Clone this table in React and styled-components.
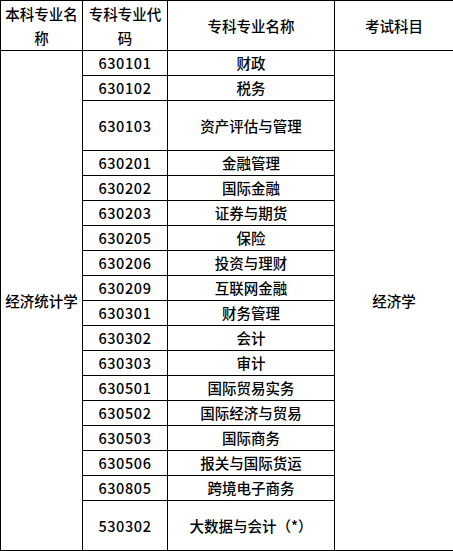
import React from "react";
import styled, { createGlobalStyle } from "styled-components";

const Global = createGlobalStyle`
  html, body { margin: 0; padding: 0; background: #fff; }
  body { font-family: "Noto Sans CJK SC", "Noto Sans", sans-serif; color: #000; }
`;

const Table = styled.table`
  border-collapse: collapse;
  table-layout: fixed;
  width: 453px;
  font-size: 14.5px;
  font-weight: 500;
  line-height: 24px;
`;

const Col = styled.col`
  width: ${(p) => p.$w}px;
`;

const Row = styled.tr`
  height: ${(p) => p.$h}px;
`;

const Cell = styled.td`
  border: 1px solid #000;
  padding: 0 3px;
  text-align: center;
  vertical-align: middle;
  white-space: ${(p) => (p.$wrap ? "normal" : "nowrap")};
  overflow: hidden;
`;

const HeadCell = styled(Cell).attrs({ as: "th" })`
  font-weight: 500;
`;

const Code = styled(Cell)`
  letter-spacing: 0.6px;
`;

const majors = [
  ["630101", "财政", 25],
  ["630102", "税务", 25],
  ["630103", "资产评估与管理", 50],
  ["630201", "金融管理", 25],
  ["630202", "国际金融", 25],
  ["630203", "证券与期货", 25],
  ["630205", "保险", 25],
  ["630206", "投资与理财", 25],
  ["630209", "互联网金融", 25],
  ["630301", "财务管理", 25],
  ["630302", "会计", 25],
  ["630303", "审计", 25],
  ["630501", "国际贸易实务", 25],
  ["630502", "国际经济与贸易", 25],
  ["630503", "国际商务", 25],
  ["630506", "报关与国际货运", 25],
  ["630805", "跨境电子商务", 25],
  ["530302", "大数据与会计（*）", 50],
];

export default function App() {
  return (
    <>
      <Global />
      <Table>
        <colgroup>
          <Col $w={82} />
          <Col $w={85} />
          <Col $w={167} />
          <Col $w={119} />
        </colgroup>
        <thead>
          <Row $h={50}>
            <HeadCell $wrap>本科专业名称</HeadCell>
            <HeadCell $wrap>专科专业代码</HeadCell>
            <HeadCell>专科专业名称</HeadCell>
            <HeadCell>考试科目</HeadCell>
          </Row>
        </thead>
        <tbody>
          {majors.map(([code, name, h], i) => (
            <Row key={code} $h={h}>
              {i === 0 && <Cell rowSpan={majors.length}>经济统计学</Cell>}
              <Code>{code}</Code>
              <Cell>{name}</Cell>
              {i === 0 && <Cell rowSpan={majors.length}>经济学</Cell>}
            </Row>
          ))}
        </tbody>
      </Table>
    </>
  );
}
